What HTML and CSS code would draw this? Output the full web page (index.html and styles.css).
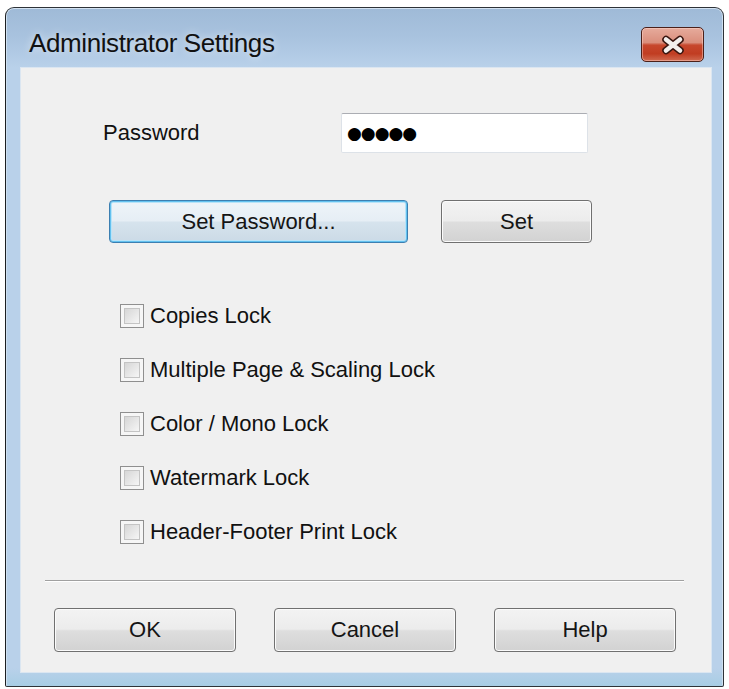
FILE: index.html
```html
<!DOCTYPE html>
<html lang="en">
<head>
<meta charset="utf-8">
<title>Administrator Settings</title>
<link rel="stylesheet" href="styles.css">
</head>
<body>
<div class="window">
  <div class="titlebar">
    <span class="title">Administrator Settings</span>
    <div class="close" aria-label="Close">
      <svg width="28" height="20" viewBox="0 0 28 20">
        <path d="M7 4.5 L21 15.5 M21 4.5 L7 15.5" stroke="#3a1610" stroke-width="7.5" stroke-linecap="round" fill="none"/>
        <path d="M7 4.5 L21 15.5 M21 4.5 L7 15.5" stroke="#f4f0ee" stroke-width="4.5" stroke-linecap="round" fill="none"/>
      </svg>
    </div>
  </div>
  <div class="client">
    <div class="pw-row">
      <label class="pw-label">Password</label>
      <div class="pw-field"><span class="dots">●●●●●</span></div>
    </div>
    <div class="btn-row">
      <button class="btn btn-default btn-setpw">Set Password...</button>
      <button class="btn btn-set">Set</button>
    </div>
    <ul class="locks">
      <li class="lock"><span class="cb"></span><span>Copies Lock</span></li>
      <li class="lock"><span class="cb"></span><span>Multiple Page &amp; Scaling Lock</span></li>
      <li class="lock"><span class="cb"></span><span>Color / Mono Lock</span></li>
      <li class="lock"><span class="cb"></span><span>Watermark Lock</span></li>
      <li class="lock"><span class="cb"></span><span>Header-Footer Print Lock</span></li>
    </ul>
    <div class="sep"></div>
    <div class="footer">
      <button class="btn btn-foot">OK</button>
      <button class="btn btn-foot">Cancel</button>
      <button class="btn btn-foot">Help</button>
    </div>
  </div>
</div>
</body>
</html>
```
FILE: styles.css
```css
html, body {
  margin: 0;
  padding: 0;
  background: #ffffff;
}

body {
  font-family: "Liberation Sans", Arial, sans-serif;
  color: #111;
}

.window {
  box-sizing: border-box;
  margin: 7px 0 0 5px;
  width: 719px;
  height: 680px;
  border: 1px solid #2e3338;
  border-left-color: #1c1f22;
  border-radius: 9px 9px 2px 2px;
  background: linear-gradient(to bottom, #9fbad7 0px, #a9c3df 30px, #b9d1ea 60px, #b9d1ea 660px, #a8cde4 678px);
  box-shadow: inset 0 1px 0 #d3e2f1, inset 1px 0 0 #cfe0f0, inset -1px 0 0 #cfe0f0;
  display: flex;
  flex-direction: column;
}

.titlebar {
  height: 60px;
  flex: none;
  display: flex;
  align-items: flex-start;
}

.title {
  margin: 20px 0 0 23px;
  font-size: 26px;
  line-height: 30px;
  color: #111;
  letter-spacing: -0.4px;
  text-shadow: 0 0 8px rgba(255, 255, 255, 0.7);
}

.close {
  box-sizing: border-box;
  margin: 19px 19px 0 auto;
  width: 63px;
  height: 35px;
  border: 1px solid #4b2019;
  border-radius: 5px;
  background: linear-gradient(to bottom, #e6ab9c 0%, #da8e7c 44%, #c7472d 52%, #c13d22 78%, #d06a50 100%);
  box-shadow: inset 0 0 0 1px rgba(255, 220, 210, 0.45);
  display: flex;
  align-items: center;
  justify-content: center;
}

.client {
  box-sizing: border-box;
  flex: none;
  height: 604px;
  margin: 0 12px 0 15px;
  background: #f0f0f0;
  box-shadow: 0 0 0 1px #dbe6f1;
  display: flex;
  flex-direction: column;
}

.pw-row {
  margin-top: 45px;
  height: 40px;
  padding-left: 82px;
  display: flex;
  align-items: center;
}

.pw-label {
  width: 238px;
  font-size: 22px;
}

.pw-field {
  box-sizing: border-box;
  width: 247px;
  height: 40px;
  background: #ffffff;
  border: 1px solid #dde2e8;
  border-top-color: #abadb3;
  border-radius: 2px;
  display: flex;
  align-items: center;
  padding-left: 5px;
}

.dots {
  font-family: "DejaVu Sans", sans-serif;
  font-size: 17px;
  letter-spacing: -1px;
  color: #000;
}

.btn-row {
  margin-top: 47px;
  padding-left: 88px;
  display: flex;
  gap: 33px;
}

.btn {
  box-sizing: border-box;
  font-family: "Liberation Sans", Arial, sans-serif;
  font-size: 22px;
  color: #151515;
  border: 1px solid #707070;
  border-radius: 4px;
  background: linear-gradient(to bottom, #f3f3f3 0%, #ececec 48%, #dedede 52%, #d2d2d2 100%);
  box-shadow: inset 0 0 0 1px #fbfbfb;
  padding: 0;
  margin: 0;
}

.btn-setpw {
  width: 299px;
  height: 43px;
}

.btn-default {
  border-color: #3c7fb1;
  background: linear-gradient(to bottom, #eef4f9 0%, #e6eef5 48%, #d6e3ed 52%, #cbdae6 100%);
  box-shadow: inset 0 0 0 1px #63c1ef, inset 0 0 0 2px #b8e3f8;
}

.btn-set {
  width: 151px;
  height: 43px;
}

.locks {
  list-style: none;
  margin: 46px 0 0 0;
  padding: 0 0 0 99px;
}

.lock {
  height: 54px;
  display: flex;
  align-items: center;
  gap: 6px;
  font-size: 22px;
}

.cb {
  box-sizing: border-box;
  width: 24px;
  height: 24px;
  flex: none;
  border: 1px solid #8f8f8f;
  background: #f6f6f6;
  padding: 3px;
  display: flex;
}

.cb::after {
  content: "";
  flex: 1;
  border: 1px solid #c4c4c4;
  background: linear-gradient(135deg, #d6d6d6 0%, #e6e6e6 50%, #f6f6f6 100%);
}

.sep {
  margin: 21px 27px 0 24px;
  height: 1px;
  background: #a0a0a0;
  box-shadow: 0 1px 0 #ffffff;
}

.footer {
  margin-top: 27px;
  padding-left: 33px;
  display: flex;
  gap: 38px;
}

.btn-foot {
  width: 182px;
  height: 44px;
}
```
